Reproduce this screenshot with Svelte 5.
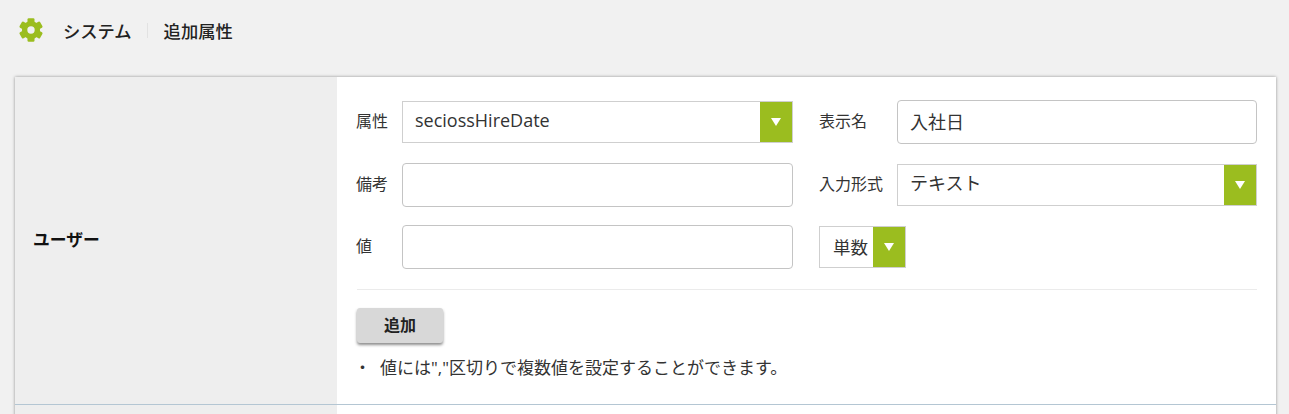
<script>
  let attr = "seciossHireDate";
  let dispName = "入社日";
  const note = '値には","区切りで複数値を設定することができます。';
  const teeth = [0, 60, 120, 180, 240, 300];
</script>

<div class="page">
  <header class="crumbs">
    <svg class="gear" viewBox="0 0 24 24" width="24" height="24">
      <circle cx="12" cy="12" r="6.4" fill="none" stroke="#9bbd1f" stroke-width="5.400" />
      {#each teeth as a}
        <rect x="8.500" y="0.200" width="7" height="6" rx="1.200" fill="#9bbd1f" transform="rotate({a} 12 12)" />
      {/each}
    </svg>
    <span class="crumb">システム</span>
    <span class="sep"></span>
    <span class="crumb">追加属性</span>
  </header>

  <div class="table">
    <section class="row">
      <div class="side">ユーザー</div>
      <div class="main">
        <div class="fields">
          <span class="lbl">属性</span>
          <div class="select"><span class="val">{attr}</span><span class="arrow"><i></i></span></div>
          <span class="lbl second">表示名</span>
          <input class="text" type="text" bind:value={dispName} />
        </div>
        <div class="fields gap19">
          <span class="lbl">備考</span>
          <input class="text" type="text" />
          <span class="lbl second">入力形式</span>
          <div class="select"><span class="val">テキスト</span><span class="arrow"><i></i></span></div>
        </div>
        <div class="fields gap18">
          <span class="lbl">値</span>
          <input class="text" type="text" />
          <div class="select small"><span class="val">単数</span><span class="arrow"><i></i></span></div>
        </div>
        <hr />
        <button class="add" type="button">追加</button>
        <ul class="notes">
          <li>{note}</li>
        </ul>
      </div>
    </section>
    <section class="row next">
      <div class="side"></div>
      <div class="main"></div>
    </section>
  </div>
</div>

<style>
  :global(body) {
    margin: 0;
    background: #f1f1f1;
    overflow: hidden;
  }

  .page {
    height: 414px;
    font-family: "Open Sans", "Noto Sans CJK JP", sans-serif;
    color: #333;
    padding: 0 13px 0 15px;
    overflow: hidden;
  }

  .crumbs {
    display: flex;
    align-items: center;
    height: 60px;
    padding-bottom: 2px;
    margin-left: 4px;
    font-size: 17.300px;
    font-weight: 500;
    color: #222;
  }

  .gear {
    margin-right: 20px;
    margin-top: -1px;
  }

  .sep {
    width: 1px;
    height: 15px;
    background: #e2e2e2;
    margin: 0 16px 0 15px;
  }

  .table {
    margin-top: 15px;
    background: #fff;
    box-shadow: 0 0 3px rgba(0, 0, 0, 0.4);
  }

  .row {
    display: flex;
    height: 327px;
    border-bottom: 1px solid #b4c6d3;
  }

  .row.next {
    height: 40px;
    border-bottom: none;
  }

  .side {
    width: 322px;
    flex-shrink: 0;
    background: #eeeeee;
    display: flex;
    align-items: center;
    padding: 0 0 3px 18px;
    box-sizing: border-box;
    font-size: 16.800px;
    font-weight: 700;
    color: #111;
  }

  .main {
    flex: 1;
    padding: 23px 19px 0 19px;
  }

  .fields {
    display: grid;
    grid-template-columns: 46px 391px 104px 360px;
    height: 44px;
    align-items: center;
  }

  .gap19 {
    margin-top: 19px;
  }

  .gap18 {
    margin-top: 18px;
  }

  .lbl {
    font-size: 16px;
    padding-bottom: 4px;
    color: #333;
    white-space: nowrap;
  }

  .lbl.second {
    margin-left: 26px;
  }

  .text {
    height: 44px;
    box-sizing: border-box;
    width: 100%;
    border: 1px solid #c4c4c4;
    border-radius: 4px;
    background: #fff;
    padding: 0 12px 3px;
    font: inherit;
    font-size: 18px;
    color: #333;
    outline: none;
  }

  .select {
    display: flex;
    height: 42px;
    box-sizing: border-box;
    border: 1px solid #cfcfcf;
    background: #fff;
  }

  .select .val {
    flex: 1;
    padding-left: 12px;
    font-size: 18px;
    line-height: 37px;
    color: #333;
  }

  .arrow {
    width: 32px;
    background: #9bbd1f;
    display: flex;
    align-items: center;
    justify-content: center;
  }

  .arrow i {
    width: 0;
    height: 0;
    border-left: 5px solid transparent;
    border-right: 5px solid transparent;
    border-top: 8px solid #fff;
  }

  .select.small {
    width: 87px;
    margin-left: 26px;
    grid-column: 3 / span 2;
  }

  .select.small .val {
    padding-left: 13px;
    line-height: 41px;
    font-size: 17.500px;
  }

  hr {
    border: none;
    border-top: 1px solid #ebebeb;
    margin: 20px 0 0 1px;
  }

  .add {
    display: block;
    margin: 18px 0 0 1px;
    width: 86px;
    height: 35px;
    padding: 0 0 3px;
    border: none;
    border-radius: 3px;
    background: #d8d8d8;
    box-shadow: 0 2px 3px rgba(0, 0, 0, 0.45);
    font-family: inherit;
    font-size: 16px;
    font-weight: 700;
    color: #222;
  }

  .notes {
    list-style: none;
    margin: 14px 0 0 0;
    padding: 0;
    font-size: 17px;
    line-height: 22px;
    color: #333;
  }

  .notes li::before {
    content: "・";
    display: inline-block;
    width: 26px;
    margin-left: -2px;
  }
</style>
